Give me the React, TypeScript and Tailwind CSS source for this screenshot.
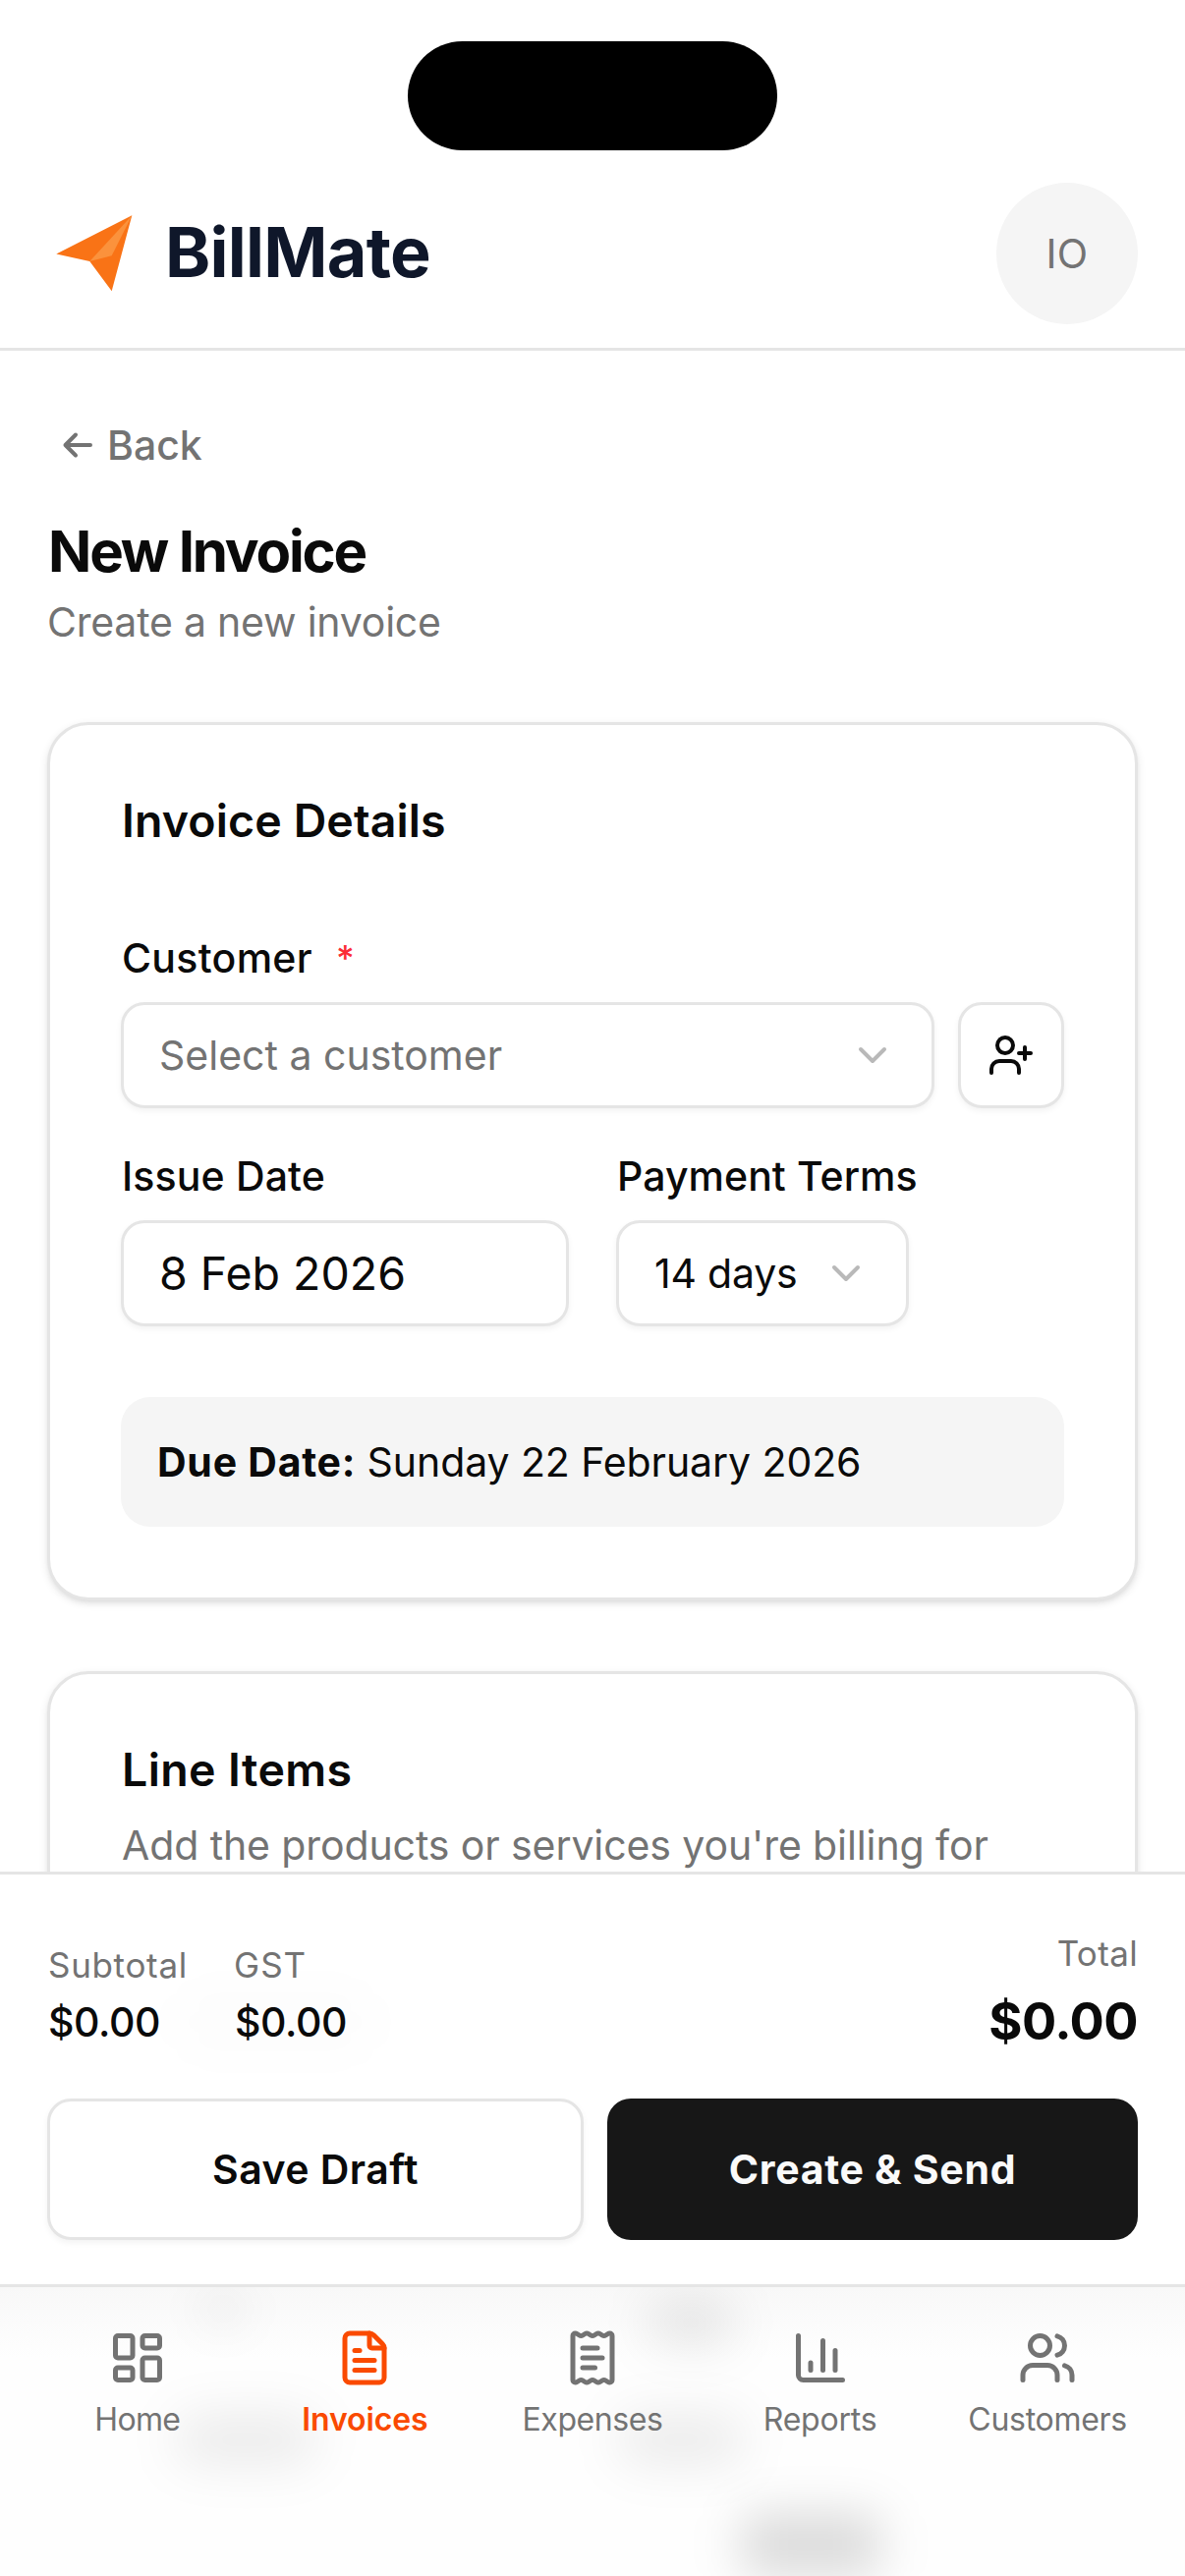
import { useState } from "react";
import {
  ChartColumn,
  ChevronDown,
  FileText,
  LayoutDashboard,
  ReceiptText,
  UserPlus,
  Users,
} from "lucide-react";

const navItems = [
  { label: "Home", icon: LayoutDashboard, tracking: "tracking-[-0.67px]" },
  { label: "Invoices", icon: FileText, tracking: "tracking-[-0.1px]" },
  { label: "Expenses", icon: ReceiptText, tracking: "tracking-[-0.42px]" },
  { label: "Reports", icon: ChartColumn, tracking: "tracking-[-0.21px]" },
  { label: "Customers", icon: Users, tracking: "tracking-[-0.28px]" },
];

const field =
  "flex h-[108px] items-center rounded-[24px] border-[3px] border-[#e5e5e5] bg-white shadow-[0_3px_6px_rgba(0,0,0,0.05)]";

const card =
  "rounded-[42px] border-[3px] border-[#e5e5e5] bg-white p-[72px] shadow-[0_3px_9px_rgba(0,0,0,0.1),0_3px_6px_-3px_rgba(0,0,0,0.1)]";

function Header() {
  return (
    <header className="relative shrink-0 border-b-[3px] border-[#e5e5e5] pt-[162px]">
      <div className="absolute top-[41.5px] left-[415px] h-[111px] w-[376px] rounded-full bg-black" />
      <div className="flex items-center justify-between px-12 py-6">
        <div className="flex items-center gap-6">
          <svg viewBox="0 0 96 96" className="size-24">
            <path d="M9.3 48.5 86.3 9.3 65.7 86.2 43.3 56Z" fill="#f97316" />
            <path d="M86.3 9.3 65.7 50.3 43.3 56Z" fill="#fb923c" />
          </svg>
          <span className="pb-[2px] text-[70px] leading-[84px] font-bold tracking-[-0.72px] text-[#0f172a]">
            BillMate
          </span>
        </div>
        <div className="flex size-36 items-center justify-center rounded-full bg-[#f5f5f5] tracking-[0.3px] text-[#737373]">
          IO
        </div>
      </div>
    </header>
  );
}

function InvoiceDetails() {
  return (
    <section className={card}>
      <h2 className="ml-px text-[46.5px] leading-[50px] font-semibold tracking-[0.11px]">
        Invoice Details
      </h2>

      <label className="mt-[94px] ml-px flex gap-6 leading-[42px] font-medium tracking-[0.3px]">
        Customer
        <span className="text-[36px] text-[#fb2c36]">*</span>
      </label>
      <div className="mt-6 flex gap-6">
        <button type="button" className={`${field} flex-1 justify-between px-9`}>
          <span className="text-[#737373]">Select a customer</span>
          <ChevronDown size={48} className="text-[#b9b9b9]" />
        </button>
        <button type="button" className={`${field} w-[108px] justify-center`}>
          <UserPlus size={48} />
        </button>
      </div>

      <div className="mt-12 flex gap-12">
        <div className="w-[456px]">
          <p className="ml-px leading-[42px] font-medium tracking-[0.15px]">
            Issue Date
          </p>
          <div className={`${field} mt-6 px-9 text-[46.5px]`}>8 Feb 2026</div>
        </div>
        <div>
          <p className="ml-px leading-[42px] font-medium tracking-[0.06px]">
            Payment Terms
          </p>
          <button
            type="button"
            className={`${field} mt-6 w-[298px] justify-between pr-[37px] pl-9 tracking-[-0.2px]`}
          >
            14 days
            <ChevronDown size={48} className="text-[#b9b9b9]" />
          </button>
        </div>
      </div>

      <p className="mt-[72px] rounded-[30px] bg-[#f5f5f5] p-9 pl-[37px] tracking-[-0.08px]">
        <span className="font-bold tracking-[0.75px]">Due Date:</span> Sunday 22
        February 2026
      </p>
    </section>
  );
}

function TotalsBar() {
  return (
    <div className="relative h-[420px] shrink-0 border-t-[3px] border-[#e5e5e5] bg-white px-12 pt-14">
      <div className="absolute top-[120px] left-[180px] h-[60px] w-[200px] rounded-full bg-black/1 blur-[24px]" />
      <div className="relative flex h-[172px] justify-between">
        <div className="flex gap-12 pt-3">
          <div className="ml-px w-[141px]">
            <p className="text-[35px] leading-[48px] tracking-[0.68px] text-[#737373]">
              Subtotal
            </p>
            <p className="mt-1 font-medium tracking-[-0.4px]">$0.00</p>
          </div>
          <div>
            <p className="text-[35px] leading-[48px] tracking-[1.02px] text-[#737373]">
              GST
            </p>
            <p className="mt-1 ml-px font-medium tracking-[-0.4px]">$0.00</p>
          </div>
        </div>
        <div className="text-right">
          <p className="text-[35px] leading-[48px] tracking-[0.35px] text-[#737373]">
            Total
          </p>
          <p className="mt-[3px] text-[52.3px] leading-[84px] font-bold tracking-[-0.54px]">
            $0.00
          </p>
        </div>
      </div>
      <div className="relative flex gap-6">
        <button
          type="button"
          className="h-36 w-[546px] rounded-[24px] border-[3px] border-[#e5e5e5] bg-white font-semibold tracking-[0.46px] shadow-[0_3px_6px_rgba(0,0,0,0.05)]"
        >
          Save Draft
        </button>
        <button
          type="button"
          className="h-36 flex-1 rounded-[24px] bg-[#171717] font-bold tracking-[0.7px] text-[#fafafa]"
        >
          Create &amp; Send
        </button>
      </div>
    </div>
  );
}

function BottomNav() {
  const [active, setActive] = useState("Invoices");

  return (
    <nav className="relative h-[297px] shrink-0 overflow-hidden border-t-[3px] border-[#e5e5e5] bg-[#fefefe]">
      <div className="absolute inset-x-0 top-0 h-[72px] bg-linear-to-b from-[#f8f8f8] to-transparent" />
      <div className="absolute top-0 left-[200px] h-[44px] w-[54px] rounded-full bg-black/4 blur-[20px]" />
      <div className="absolute top-[12px] left-[658px] h-[48px] w-[90px] rounded-full bg-black/9 blur-[24px]" />
      <div className="absolute top-[130px] left-[178px] h-[50px] w-[145px] rounded-full bg-black/8 blur-[25px]" />
      <div className="absolute top-[130px] left-[628px] h-[50px] w-[130px] rounded-full bg-black/8 blur-[25px]" />
      <div className="absolute top-[230px] left-[754px] h-[64px] w-[142px] rounded-2xl bg-black/14 blur-[24px]" />

      <div className="relative flex px-6 pt-[42px]">
        {navItems.map(({ label, icon: Icon, tracking }) => (
          <button
            key={label}
            type="button"
            onClick={() => setActive(label)}
            className={`flex flex-1 flex-col items-center gap-[9px] ${
              active === label
                ? "font-semibold text-[#fa4a00]"
                : "text-[#737373]"
            }`}
          >
            <Icon size={60} />
            <span className={`text-[32px] leading-[48px] ${tracking}`}>
              {label}
            </span>
          </button>
        ))}
      </div>
    </nav>
  );
}

export default function App() {
  return (
    <div className="flex h-[2622px] w-[1206px] flex-col overflow-hidden bg-white font-['Inter',sans-serif] text-[41px] leading-[60px] text-[#0a0a0a]">
      <Header />

      <main className="min-h-0 flex-1 overflow-hidden px-12 pt-[66px]">
        <button
          type="button"
          className="ml-3 flex items-center gap-[7px] font-medium text-[#737373]"
        >
          <svg
            viewBox="0 0 42 42"
            className="size-[42px]"
            fill="none"
            stroke="currentColor"
            strokeWidth={4}
            strokeLinecap="round"
            strokeLinejoin="round"
          >
            <path d="M32 21H6.5M17 10.5 6.5 21 17 31.5" />
          </svg>
          Back
        </button>
        <h1 className="mt-[42px] ml-px text-[58.2px] leading-[72px] font-bold tracking-[-2.2px]">
          New Invoice
        </h1>
        <p className="mt-1.5 tracking-[-0.22px] text-[#737373]">
          Create a new invoice
        </p>

        <div className="mt-[72px] flex flex-col gap-[72px]">
          <InvoiceDetails />
          <section className={card}>
            <h2 className="ml-px text-[46.5px] leading-[50px] font-semibold tracking-[0.4px]">
              Line Items
            </h2>
            <p className="mt-[22px] ml-px tracking-[-0.1px] whitespace-nowrap text-[#737373]">
              Add the products or services you're billing for
            </p>
          </section>
        </div>
      </main>

      <TotalsBar />
      <BottomNav />
    </div>
  );
}
